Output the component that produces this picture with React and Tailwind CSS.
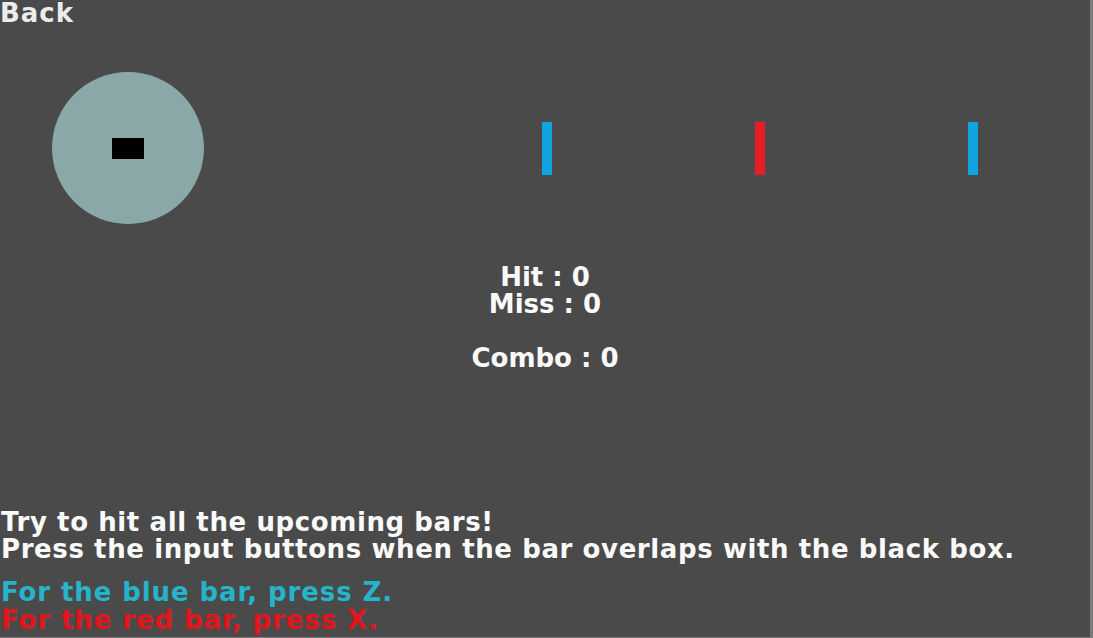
import React from 'react';

const bars = [
  { id: 1, color: 'bg-[#12a2e2]' },
  { id: 2, color: 'bg-[#e81c25]' },
  { id: 3, color: 'bg-[#12a2e2]' },
];

const App = () => {
  const hit = 0;
  const miss = 0;
  const combo = 0;

  return (
    <div
      className="w-[1093px] h-[638px] overflow-hidden bg-[#4a4a4a] border-r-[3px] border-b border-[#7c7c7c] flex flex-col text-[26px] font-bold text-[#fafafa]"
      style={{ fontFamily: '"DejaVu Sans", "Liberation Sans", sans-serif' }}
    >
      <div className="leading-[26px] -mb-[2px] text-[#ececec] tracking-[1px] cursor-pointer">Back</div>

      {/* play field */}
      <div className="flex flex-row items-center mt-[48px]">
        <div className="ml-[52px] w-[152px] h-[152px] rounded-full bg-[#8aa8a8] flex items-center justify-center">
          <div className="w-[32px] h-[21px] bg-black"></div>
        </div>
        <div className="flex flex-row ml-[338px] gap-[203px]">
          {bars.map((bar) => (
            <div key={bar.id} className={`w-[10px] h-[53px] ${bar.color}`}></div>
          ))}
        </div>
      </div>

      {/* score */}
      <div className="mt-[40px] text-center leading-[27px]">
        <p>Hit : {hit}</p>
        <p>Miss : {miss}</p>
        <p className="mt-[27px]">Combo : {combo}</p>
      </div>

      {/* instructions */}
      <div className="mt-[137px] leading-[27px] tracking-[0.6px] pl-[1px]">
        <p>Try to hit all the upcoming bars!</p>
        <p>Press the input buttons when the bar overlaps with the black box.</p>
        <p className="mt-[16px] tracking-[0.9px] text-[#25b4ca]">For the blue bar, press Z.</p>
        <p className="mt-[1px] tracking-[0.9px] text-[#e3151c]">For the red bar, press X.</p>
      </div>
    </div>
  );
};

export default App;
